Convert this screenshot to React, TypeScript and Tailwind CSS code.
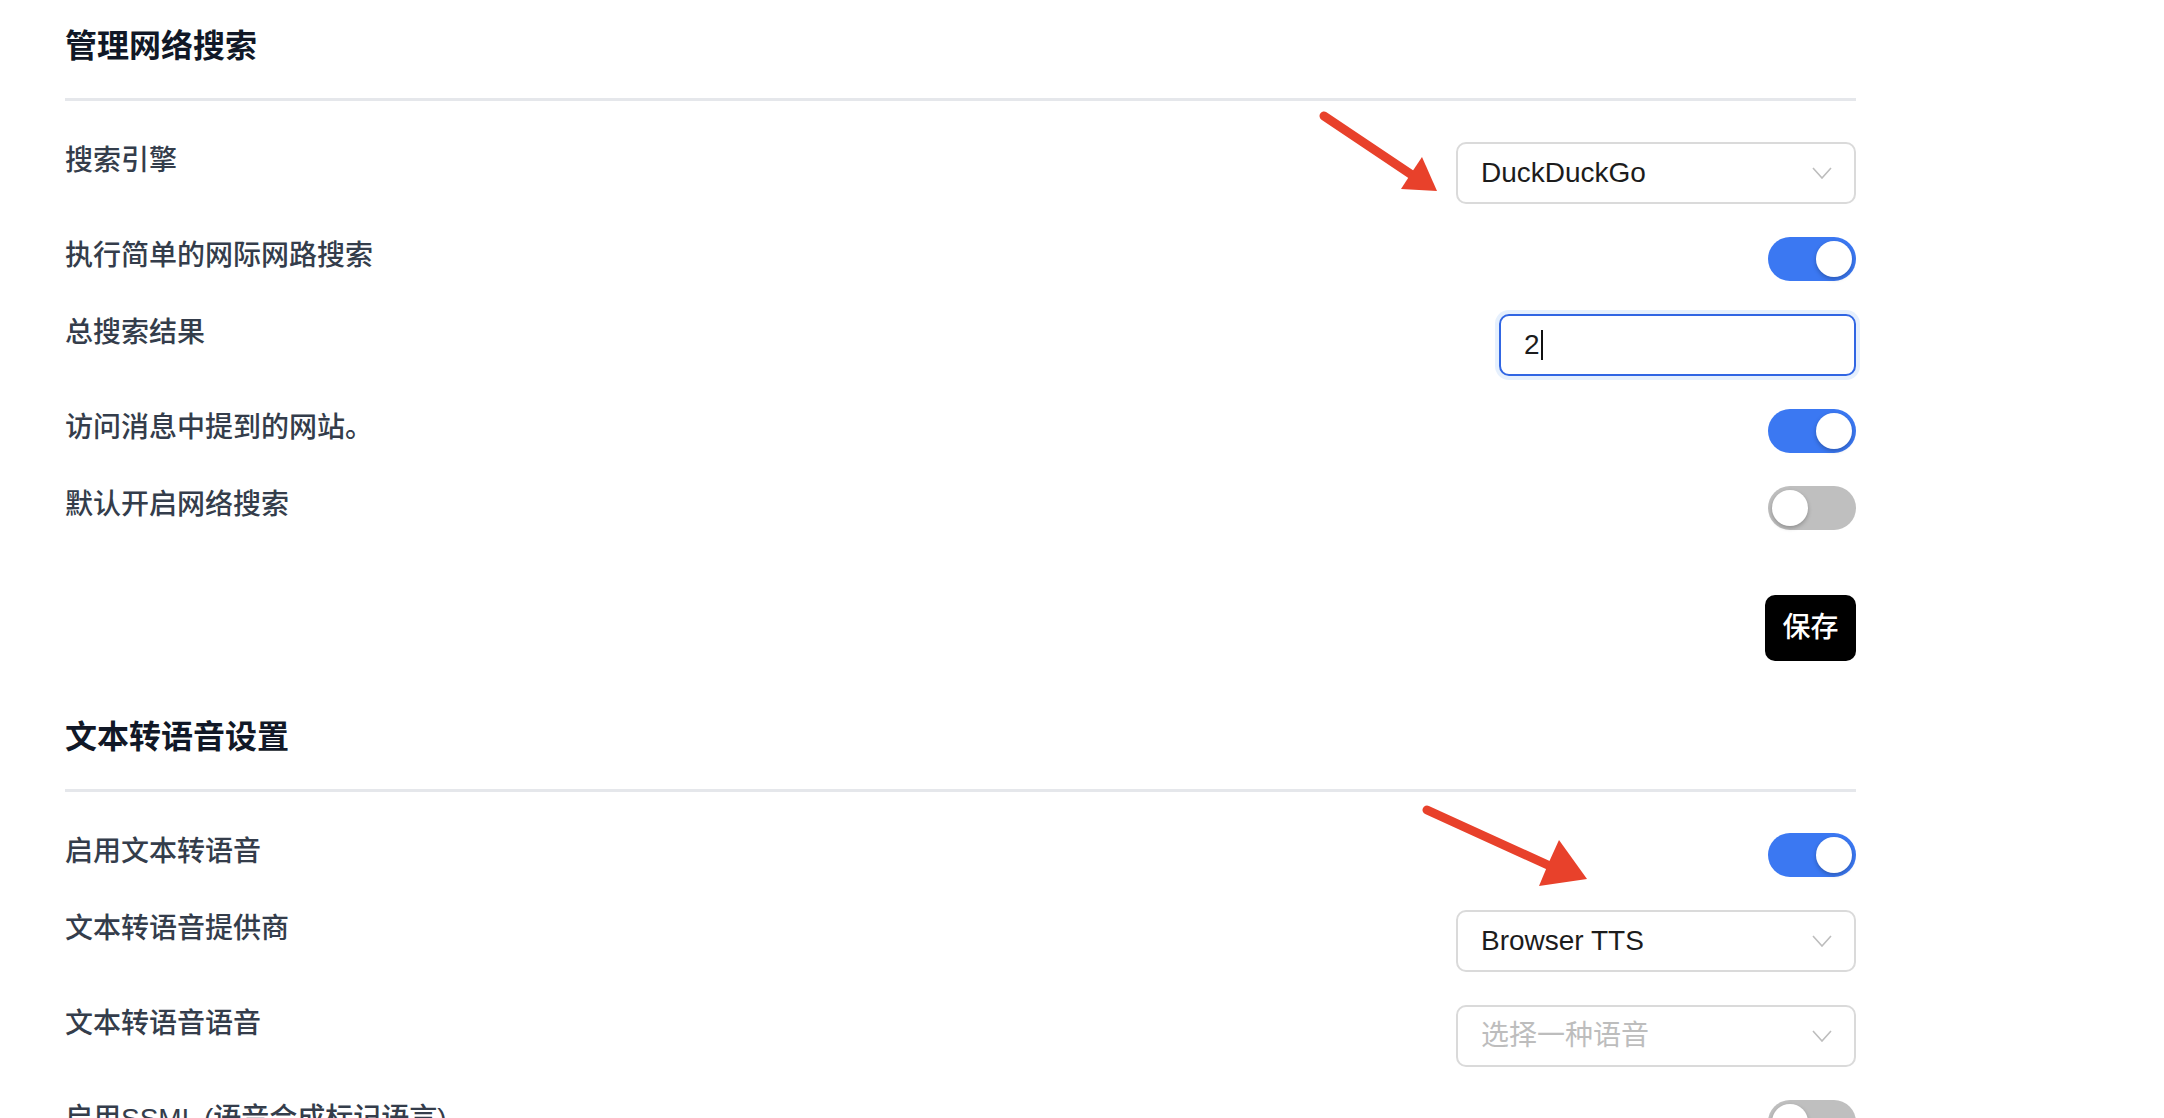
const font = "font-['Liberation_Sans','Noto_Sans_CJK_SC',sans-serif]";

const Toggle = ({ on }: { on: boolean }) => (
  <div
    className={`flex h-[44px] w-[88px] shrink-0 items-center rounded-full px-[4px] ${
      on ? "justify-end bg-[#3b78f2]" : "justify-start bg-[#bfbfbf]"
    }`}
  >
    <div className="h-[36px] w-[36px] rounded-full bg-white shadow-[0_2px_4px_rgba(0,0,0,0.25)]" />
  </div>
);

const Chevron = () => (
  <svg width="20" height="12" viewBox="0 0 20 12" fill="none">
    <polyline points="1,1 10,11 19,1" stroke="#bdbdbd" strokeWidth="1.6" />
  </svg>
);

const Select = ({ value, placeholder }: { value?: string; placeholder?: string }) => (
  <div className="flex h-[62px] w-[400px] shrink-0 items-center justify-between rounded-[10px] border-2 border-[#dadada] bg-white pl-[23px] pr-[22px]">
    {value ? (
      <span className="text-[28px] text-[#1c1c1c]">{value}</span>
    ) : (
      <span className="text-[28px] text-[#bdbdbd]">{placeholder}</span>
    )}
    <Chevron />
  </div>
);

const Row = ({ label, children }: { label: string; children: React.ReactNode }) => (
  <div className="flex items-start justify-between">
    <span className="text-[28px] font-medium leading-[38px] text-[#343d4b]">{label}</span>
    {children}
  </div>
);

const Heading = ({ title }: { title: string }) => (
  <>
    <h2 className="text-[32px] font-bold leading-[46px] text-[#111827]">{title}</h2>
    <div className="mt-[29px] h-[3px] bg-[#e5e7eb]" />
  </>
);

const Arrow = ({
  tail,
  join,
  head,
}: {
  tail: [number, number];
  join: [number, number];
  head: [number, number][];
}) => (
  <>
    <line
      x1={tail[0]}
      y1={tail[1]}
      x2={join[0]}
      y2={join[1]}
      stroke="#e8412b"
      strokeWidth="9"
      strokeLinecap="round"
    />
    <polygon points={head.map((p) => p.join(",")).join(" ")} fill="#e8412b" />
  </>
);

export default function App() {
  return (
    <div className={`relative min-h-[1118px] w-[2164px] bg-white ${font}`}>
      <div className="w-[1856px] pl-[65px] pt-[23px]">
        <Heading title="管理网络搜索" />
        <div className="mt-[41px] flex flex-col gap-[33px]">
          <Row label="搜索引擎">
            <Select value="DuckDuckGo" />
          </Row>
          <Row label="执行简单的网际网路搜索">
            <Toggle on />
          </Row>
          <Row label="总搜索结果">
            <div className="flex h-[62px] w-[357px] items-center rounded-[10px] border-2 border-[#3166e3] bg-white pl-[23px] shadow-[0_0_0_4px_#e6f0fd]">
              <span className="text-[28px] text-[#1c1c1c]">2</span>
              <span className="ml-[1px] h-[30px] w-[2px] bg-[#111]" />
            </div>
          </Row>
          <Row label="访问消息中提到的网站。">
            <Toggle on />
          </Row>
          <Row label="默认开启网络搜索">
            <Toggle on={false} />
          </Row>
        </div>
        <div className="mt-[65px] flex justify-end">
          <button className="h-[66px] w-[91px] rounded-[10px] bg-black text-[28px] font-medium text-white">
            保存
          </button>
        </div>
        <div className="mt-[53px]">
          <Heading title="文本转语音设置" />
        </div>
        <div className="mt-[41px] flex flex-col gap-[33px]">
          <Row label="启用文本转语音">
            <Toggle on />
          </Row>
          <Row label="文本转语音提供商">
            <Select value="Browser TTS" />
          </Row>
          <Row label="文本转语音语音">
            <Select placeholder="选择一种语音" />
          </Row>
          <Row label="启用SSML (语音合成标记语言)">
            <Toggle on={false} />
          </Row>
        </div>
      </div>
      <svg
        className="pointer-events-none absolute left-0 top-0"
        width="2164"
        height="1118"
        viewBox="0 0 2164 1118"
      >
        <Arrow
          tail={[1324, 116]}
          join={[1412, 175]}
          head={[
            [1437, 191],
            [1422, 157],
            [1412, 172],
            [1401, 189],
          ]}
        />
        <Arrow
          tail={[1427, 810]}
          join={[1550, 866]}
          head={[
            [1587, 879],
            [1559, 840],
            [1549, 862],
            [1539, 886],
          ]}
        />
      </svg>
    </div>
  );
}
